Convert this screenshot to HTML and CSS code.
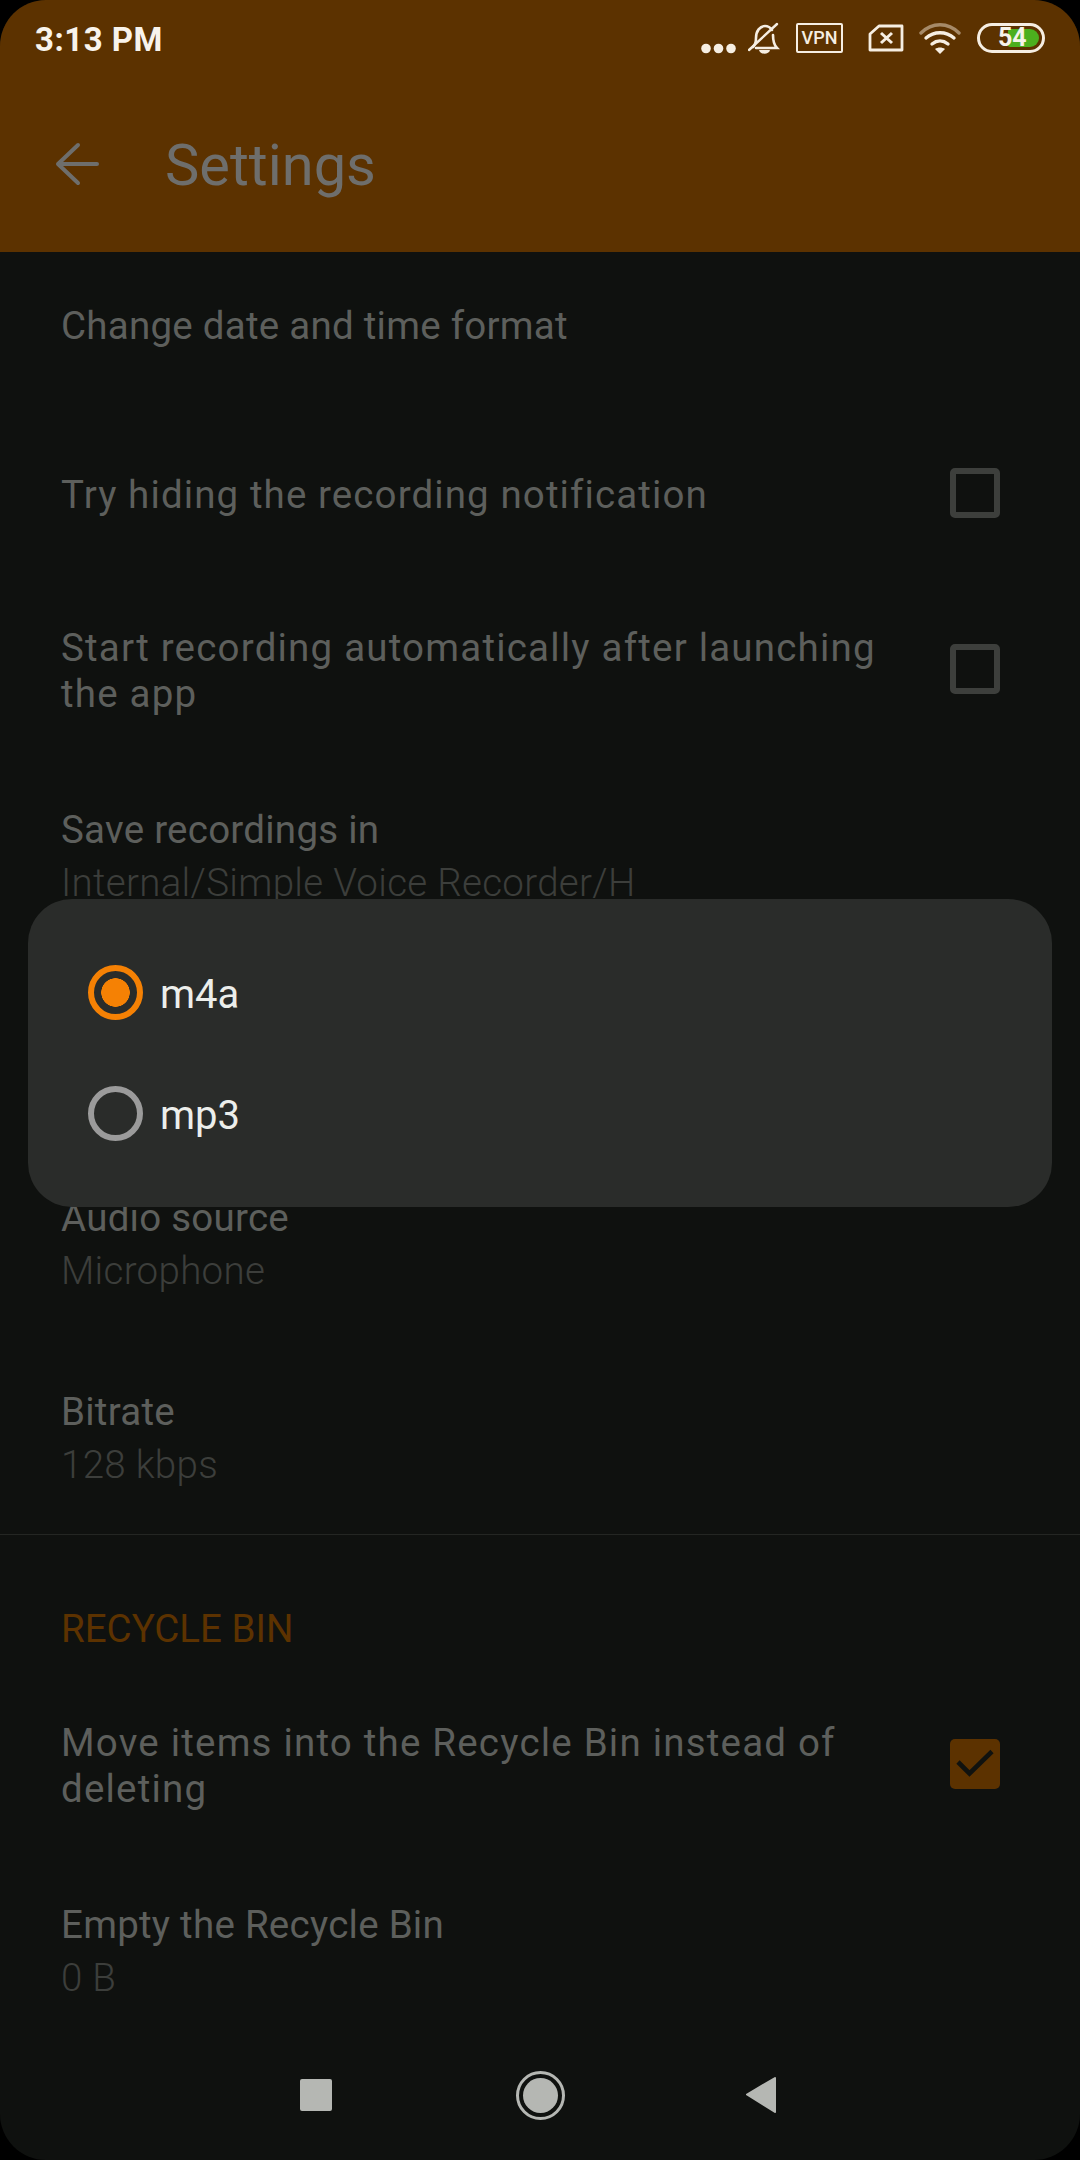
FILE: index.html
```html
<!DOCTYPE html>
<html lang="en">
<head>
  <meta charset="UTF-8" />
  <meta name="viewport" content="width=device-width, initial-scale=1.0" />
  <title>Settings</title>
  <link rel="stylesheet" href="styles.css">
</head>
<body>
  <div class="app">
    <header class="appbar">
      <div class="status">
        <span class="time">3:13 PM</span>
        <div class="status-icons">
          <svg class="dots" width="35" height="11" viewBox="0 0 35 11"><circle cx="5" cy="5.500" r="4.800"/><circle cx="17.500" cy="5.500" r="4.800"/><circle cx="30" cy="5.500" r="4.800"/></svg>
          <svg class="bell" width="32" height="33" viewBox="0 0 32 33"><path d="M5 25c2-2 3-5 3-9 0-7 4-12 9-12 3 0 5 1 7 4M25 13c0 6 1 10 4 13H8" fill="none" stroke="#f6eee2" stroke-width="2.600" stroke-linecap="round"/><path d="M1 28 29 2" stroke="#f6eee2" stroke-width="2.400" stroke-linecap="round"/><path d="M11 28h11c-1 5-10 5-11 0z" fill="#f6eee2"/></svg>
          <span class="vpn">VPN</span>
          <svg class="sim" width="36" height="28" viewBox="0 0 36 28"><path d="M11 2h23v24H2V10z" fill="none" stroke="#f6eee2" stroke-width="2.800" stroke-linejoin="round"/><path d="M13 9l11 10M24 9 13 19" stroke="#f6eee2" stroke-width="3"/></svg>
          <svg class="wifi" width="42" height="32" viewBox="0 0 42 32"><path d="M2 11C13 0 29 0 40 11" fill="none" stroke="#a68a68" stroke-width="3.400" stroke-linecap="round"/><path d="M7 16c8-7 20-7 28 0M13 22c5-4 11-4 16 0" fill="none" stroke="#f6eee2" stroke-width="3.400" stroke-linecap="round"/><path d="M16 27c3-2 7-2 10 0l-5 5z" fill="#f6eee2"/></svg>
          <div class="battery"><span class="battery-fill"></span><span class="battery-num">54</span></div>
        </div>
      </div>
      <div class="toolbar">
        <svg class="back" width="44" height="44" viewBox="0 0 44 44"><path d="M42 22H3M23 3 3 22l20 19" fill="none" stroke="#6e6e6c" stroke-width="4" stroke-linecap="round" stroke-linejoin="round"/></svg>
        <h1 class="title">Settings</h1>
      </div>
    </header>

    <main class="list">
      <div class="row row-plain"><div class="row-title">Change date and time format</div></div>
      <div class="row row-check row-short">
        <div class="row-title">Try hiding the recording notification</div>
        <span class="box"></span>
      </div>
      <div class="row row-check">
        <div class="row-title">Start recording automatically after launching the app</div>
        <span class="box"></span>
      </div>
      <div class="row">
        <div class="row-title">Save recordings in</div>
        <div class="row-sub">Internal/Simple Voice Recorder/H</div>
      </div>
      <!-- this row sits behind the dialog -->
      <div class="row-covered"></div>
      <div class="row">
        <div class="row-title">Audio source</div>
        <div class="row-sub">Microphone</div>
      </div>
      <div class="row">
        <div class="row-title">Bitrate</div>
        <div class="row-sub">128 kbps</div>
      </div>
      <hr class="divider">
      <div class="section">RECYCLE BIN</div>
      <div class="row row-check">
        <div class="row-title">Move items into the Recycle Bin instead of deleting</div>
        <span class="box box-on">
          <svg width="50" height="50" viewBox="0 0 50 50"><path d="M8 23l11.500 11.500L42 12.500" fill="none" stroke="#10120f" stroke-width="4.600"/></svg>
        </span>
      </div>
      <div class="row">
        <div class="row-title">Empty the Recycle Bin</div>
        <div class="row-sub">0 B</div>
      </div>
    </main>

    <nav class="navbar">
      <span class="nav-square"></span>
      <span class="nav-home"><span class="nav-home-dot"></span></span>
      <svg class="nav-back" width="32" height="38" viewBox="0 0 32 38"><path d="M30 2 2 18.500 30 36z" fill="#b5b7b3" stroke="#b5b7b3" stroke-width="2" stroke-linejoin="round"/></svg>
    </nav>

    <div class="dialog">
      <div class="option">
        <span class="radio radio-on"></span>
        <span class="option-label">m4a</span>
      </div>
      <div class="option">
        <span class="radio"></span>
        <span class="option-label">mp3</span>
      </div>
    </div>
  </div>
</body>
</html>
```

FILE: styles.css
```css
* {
  box-sizing: border-box;
}

html, body {
  margin: 0;
  background: #000;
}

body {
  font-family: Roboto, sans-serif;
}

.app {
  position: relative;
  width: 1080px;
  height: 2160px;
  overflow: hidden;
  display: flex;
  flex-direction: column;
  background: #0f110f;
  border-radius: 46px;
}

.appbar {
  position: relative;
  z-index: 1;
  height: 252px;
  flex-shrink: 0;
  background: #5c3200;
}

.status {
  height: 78px;
  padding: 0 35px;
  display: flex;
  justify-content: space-between;
  align-items: center;
}

.time {
  color: #f8f3ec;
  font-size: 33px;
  font-weight: 700;
  letter-spacing: 0.500px;
}

.status-icons {
  display: flex;
  align-items: center;
  margin-bottom: 2px;
}

.dots {
  fill: #f6eee2;
  margin-top: 20px;
  margin-right: 12px;
}

.bell {
  margin-right: 16px;
}

.vpn {
  width: 47px;
  height: 30px;
  border: 2.5px solid #f6eee2;
  border-radius: 2px;
  color: #f6eee2;
  font-size: 18px;
  font-weight: 500;
  line-height: 25px;
  text-align: center;
  margin-right: 25px;
}

.sim {
  margin-right: 15px;
}

.wifi {
  margin-right: 16px;
}

.battery {
  position: relative;
  width: 68px;
  height: 30px;
  border: 3px solid #f6eee2;
  border-radius: 15px;
}

.battery-fill {
  position: absolute;
  left: 28px;
  top: 3px;
  width: 31px;
  height: 18px;
  background: #4caf1e;
  border-radius: 2px 9px 9px 2px;
}

.battery-num {
  position: absolute;
  left: 18px;
  top: -3px;
  color: #f6f3ea;
  font-size: 25px;
  font-weight: 700;
  line-height: 30px;
}

.toolbar {
  height: 174px;
  padding-left: 55px;
  display: flex;
  align-items: center;
}

.back {
  margin-right: 66px;
  margin-bottom: 3px;
}

.title {
  margin: 0;
  color: #6e6e6c;
  font-size: 57.750px;
  font-weight: 400;
}

.list {
  flex: 1;
  min-height: 0;
  margin-top: -7px;
  overflow: hidden;
}

.row {
  padding: 47.5px 61px;
}

.row-covered {
  height: 194px;
}

.row-title {
  color: #5d5f5c;
  font-size: 38.500px;
  line-height: 46px;
  letter-spacing: 0.250px;
}

.row-sub {
  margin-top: 7px;
  color: #3c3e3b;
  font-size: 38.500px;
  font-weight: 300;
  line-height: 46px;
  letter-spacing: 0.300px;
}

.row-plain {
  padding-top: 58px;
  padding-bottom: 58px;
}

.row-check {
  padding: 44px 80px 42px 61px;
  display: flex;
  justify-content: space-between;
  align-items: center;
  gap: 60px;
}

.row-check .row-title {
  letter-spacing: 1.200px;
}

.row-short {
  min-height: 174px;
}

.row-check.row-short .row-title {
  letter-spacing: 1.100px;
}

.box {
  flex-shrink: 0;
  width: 50px;
  height: 50px;
  margin-bottom: 4px;
  border: 6px solid #3d3f3c;
  border-radius: 5px;
}

.box-on {
  border: 0;
  background: #5c3200;
}

.box-on svg {
  display: block;
}

.divider {
  height: 1px;
  margin: -1px 0 0;
  border: 0;
  background: #242623;
}

.section {
  padding: 71px 61px 24px;
  color: #5c3200;
  font-size: 38.500px;
  line-height: 46px;
}

.navbar {
  height: 112px;
  flex-shrink: 0;
  padding: 31px 0 0 300px;
  display: flex;
  align-items: flex-start;
}

.nav-square {
  width: 32px;
  height: 32px;
  background: #b5b7b3;
  border-radius: 2px;
  margin-right: 184px;
}

.nav-home {
  width: 49px;
  height: 49px;
  margin-top: -8px;
  margin-right: 180px;
  border: 3px solid #b5b7b3;
  border-radius: 50%;
  display: flex;
  align-items: center;
  justify-content: center;
}

.nav-home-dot {
  width: 35px;
  height: 35px;
  background: #b5b7b3;
  border-radius: 50%;
}

.nav-back {
  margin-top: -3px;
}

.dialog {
  position: absolute;
  z-index: 2;
  left: 28px;
  top: 899px;
  width: 1024px;
  height: 308px;
  padding: 33px 60px;
  background: #2a2c2a;
  border-radius: 44px;
}

.option {
  height: 121px;
  display: flex;
  align-items: center;
}

.radio {
  width: 55px;
  height: 55px;
  border: 6px solid #9b9b9b;
  border-radius: 50%;
  margin-right: 17px;
}

.radio-on {
  border-color: #f58104;
  background: radial-gradient(circle, #f58104 0 14px, transparent 14.500px);
}

.option-label {
  color: #eceeeb;
  font-size: 40px;
  padding-top: 4px;
}
```
